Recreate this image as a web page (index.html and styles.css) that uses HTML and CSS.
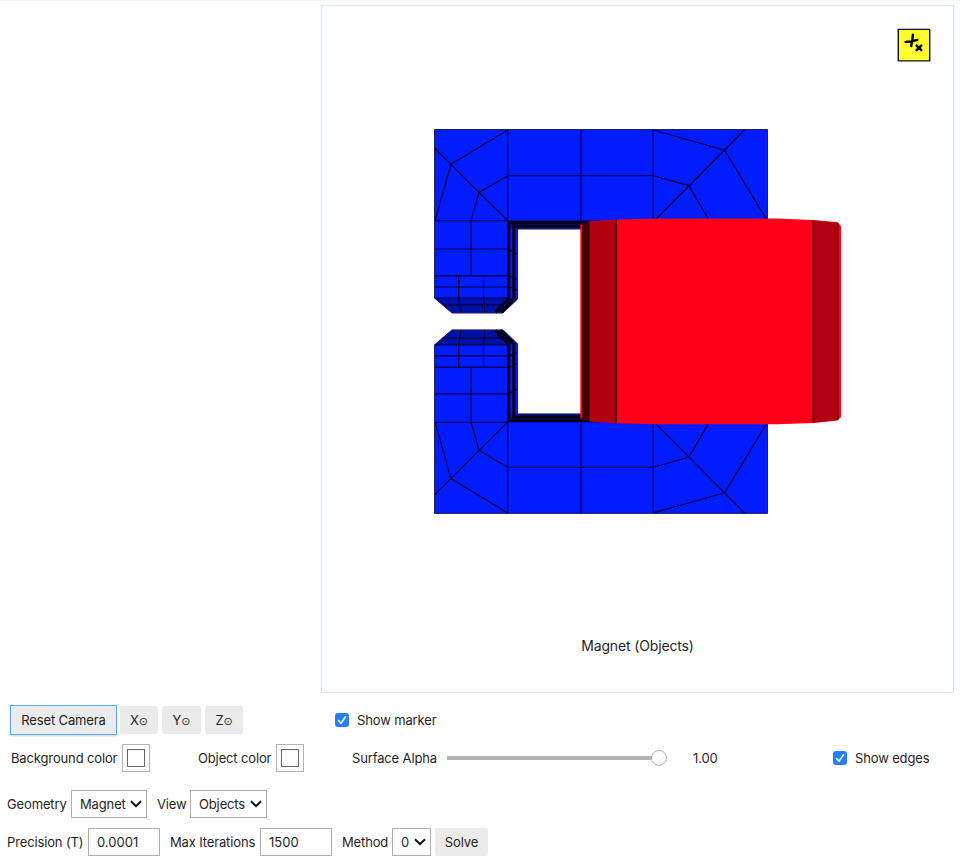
FILE: index.html
```
<!DOCTYPE html>
<html lang="en">
<head>
<meta charset="utf-8">
<title>Magnet</title>
<link rel="stylesheet" href="styles.css">
</head>
<body>
<main class="app">
  <section class="viewer">
    <svg class="scene" viewBox="322 6 631 686" width="631" height="686">
      <defs>
        <g id="half">
          <path class="iron" d="M434.5 129.5H767.5V322H581V229H517.6V299L503 313H452L434.5 298Z"/>
          <path class="iron-dark" d="M434.5 298H509L517.6 299L503 313H452Z"/>
          <path class="iron-dark" d="M508 220.7H600V229H508Z"/>
          <path class="mesh" d="M434.5 148L451 164.3L479 192.5L507.7 220.7M507.7 130L451 164.3L435 220.7M507.7 175.7L479 192.5L471 220.7V275.8M434.5 220.7H508M434.5 249H508M434.5 275.8H508M434.5 287H508M434.5 298H508M507.7 130V221M507.7 175.7H653.2L688.8 185.6L709 220M653.2 130L724.7 150.2L767 220M744.5 130L655 220M458.6 275.8V298L461 313M483.6 275.8V298L485 313M442.5 304.8H501"/>
          <path class="mesh seam" d="M580.9 130V221M653.1 130V221"/>
          <path class="band" d="M600 222.2H508.7V298.5L495.5 312.5M600 226H513.8V299L500.5 312.5"/>
          <path class="mesh" d="M510 250L517 254M510 276L517 279M510 287L517 290"/>
          <path class="mesh outline" d="M434.5 129.5H767.5V221M434.5 129.5V298L452 313H503L517.6 299V229H581"/>
        </g>
      </defs>
      <use href="#half"/>
      <use href="#half" transform="translate(0 642.9) scale(1 -1)"/>
      <path class="coil" d="M580.3 225L589 221.6L616.5 219.6L655 218.6H777L813 220L837.5 222.3L841 226V417L837.5 420.6L813 423.1L777 424.3H655L616.5 423.3L589 421.2L580.3 418Z"/>
      <path class="coil-edge" d="M582.3 224.2L589.3 221.6V421.2L582.3 418.7Z"/>
      <path class="coil-side" d="M589.3 221.7L616.3 219.9V423L589.3 421.1ZM813 220.4L837.5 222.8V420.1L813 422.7Z"/>
      <path class="coil-line" d="M616.3 219.8V423.1M837.8 223V420M813.2 220.6V422.5M589 222V421"/>
      <path class="marker" d="M898.3 29.4H929.7V60.9H898.3Z"/>
      <path class="marker-x" d="M912.9 34.8L912.3 40L911.2 46M905.6 41.9L911 41.5L917.4 39.9M916.6 45.6L921.3 50.2M921.3 45.6L916.6 50.2"/>
    </svg>
    <div class="caption">Magnet (Objects)</div>
  </section>

  <div class="row camera">
    <button class="btn reset">Reset Camera</button>
    <button class="btn axis">X<span class="dot">⊙</span></button>
    <button class="btn axis y">Y<span class="dot">⊙</span></button>
    <button class="btn axis">Z<span class="dot">⊙</span></button>
    <label class="check marker-check"><span class="box"><svg viewBox="0 0 14 14"><path d="M3.6 7.6L6 10.2L10.5 3.8"/></svg></span>Show marker</label>
  </div>

  <div class="row colors">
    <span class="label bg">Background color</span>
    <span class="swatch"></span>
    <span class="label obj">Object color</span>
    <span class="swatch"></span>
    <span class="label alpha">Surface Alpha</span>
    <span class="slider"><span class="knob"></span></span>
    <span class="label value">1.00</span>
    <label class="check"><span class="box"><svg viewBox="0 0 14 14"><path d="M3.6 7.6L6 10.2L10.5 3.8"/></svg></span>Show edges</label>
  </div>

  <div class="row geometry">
    <span class="label geo">Geometry</span>
    <span class="field magnet">Magnet<svg class="caret" viewBox="0 0 12 8"><path d="M1 1.2L6 6.2L11 1.2"/></svg></span>
    <span class="label view">View</span>
    <span class="field objects">Objects<svg class="caret" viewBox="0 0 12 8"><path d="M1 1.2L6 6.2L11 1.2"/></svg></span>
  </div>

  <div class="row solver">
    <span class="label prec">Precision (T)</span>
    <span class="field number">0.0001</span>
    <span class="label iter">Max Iterations</span>
    <span class="field number">1500</span>
    <span class="label method">Method</span>
    <span class="field zero">0<svg class="caret" viewBox="0 0 12 8"><path d="M1 1.2L6 6.2L11 1.2"/></svg></span>
    <button class="btn solve">Solve</button>
  </div>
</main>
</body>
</html>
```
FILE: styles.css
```
*, *::before { box-sizing: border-box; }
body {
  margin: 0;
  background: #fff;
  color: #1f1f1f;
  font: 13px/28px Inter, "Liberation Sans", sans-serif;
  letter-spacing: -0.14px;
}
.app {
  height: 861px;
  border-top: 1px solid #f7f7f7;
  padding-top: 4px;
  overflow: hidden;
}
.viewer {
  display: grid;
  width: 633px;
  height: 688px;
  margin-left: 321px;
  border: 1px solid #d3e9f1;
}
.scene, .caption { grid-area: 1 / 1; }
.caption {
  align-self: end;
  justify-self: center;
  margin-bottom: 32px;
  font-size: 14px;
}
.iron { fill: #001cff; }
.iron-dark { fill: #0010a8; }
.mesh { fill: none; stroke: #00003c; stroke-width: 1.15; }
.seam { stroke-width: 1.5; stroke: #000a80; }
.outline { stroke: #202050; stroke-width: 1; }
.band { fill: none; stroke: #00000c; stroke-width: 3; }
.coil { fill: #ff0019; }
.coil-edge { fill: #3a0004; }
.coil-side { fill: #b00012; }
.coil-line { fill: none; stroke: #400006; stroke-width: 1.3; }
.marker { fill: #ffff32; stroke: #111; stroke-width: 1.4; }
.marker-x { fill: none; stroke: #000; stroke-width: 2.4; stroke-linecap: round; }

.row { display: flex; align-items: center; height: 28px; white-space: nowrap; }
.camera { margin-top: 13px; padding-left: 10px; }
.colors { margin-top: 10px; padding-left: 11px; }
.geometry { margin-top: 18px; padding-left: 7px; }
.solver { margin-top: 10px; padding-left: 7px; }
.label { flex: none; }
.btn {
  flex: none;
  height: 28px;
  padding: 0;
  border: 0;
  border-radius: 2px;
  background: #ebebeb;
  color: inherit;
  font: inherit;
  letter-spacing: inherit;
  text-align: center;
}
.reset {
  width: 107px;
  height: 30px;
  margin-right: 3px;
  border: 1px solid #55aeea;
  border-radius: 0;
  box-shadow: 0 1px 2px rgba(0, 0, 0, .2);
}
.axis { width: 38px; margin-right: 4px; }
.axis.y { width: 39px; }
.dot { font: 11px/1 "DejaVu Sans", sans-serif; }
.check { display: flex; align-items: center; }
.marker-check { margin-left: 88px; }
.box { width: 14px; height: 14px; margin-right: 8px; border-radius: 3px; background: #277ff8; }
.box svg { display: block; fill: none; stroke: #fff; stroke-width: 1.6; stroke-linecap: round; }
.bg { width: 111px; }
.obj { width: 78px; margin-left: 48px; }
.swatch { flex: none; width: 28px; height: 28px; padding: 4px; border: 1px solid #b3b3b3; }
.swatch::before { content: ""; display: block; width: 18px; height: 18px; border: 1px solid #666; }
.alpha { width: 95px; margin-left: 48px; }
.slider { display: flex; align-items: center; justify-content: flex-end; width: 220px; height: 16px; background: linear-gradient(#b3b3b3, #b3b3b3) 0 50% / 206px 4px no-repeat; }
.knob { width: 16px; height: 16px; border: 1px solid #b3b3b3; border-radius: 50%; background: #fff; }
.value { width: 140px; margin-left: 26px; }
.field {
  display: flex;
  flex: none;
  align-items: center;
  justify-content: space-between;
  height: 28px;
  padding: 0 4px 0 8px;
  border: 1px solid #b0b0b0;
}
.caret { width: 12px; height: 8px; fill: none; stroke: #111; stroke-width: 2; }
.geo { width: 64px; }
.magnet { width: 76px; }
.view { width: 33px; margin-left: 10px; }
.objects { width: 77px; }
.prec { width: 81px; }
.number { width: 72px; letter-spacing: 0; }
.iter { width: 90px; margin-left: 10px; }
.method { width: 50px; margin-left: 10px; }
.zero { width: 39px; }
.solve { width: 53px; margin-left: 4px; }
```
